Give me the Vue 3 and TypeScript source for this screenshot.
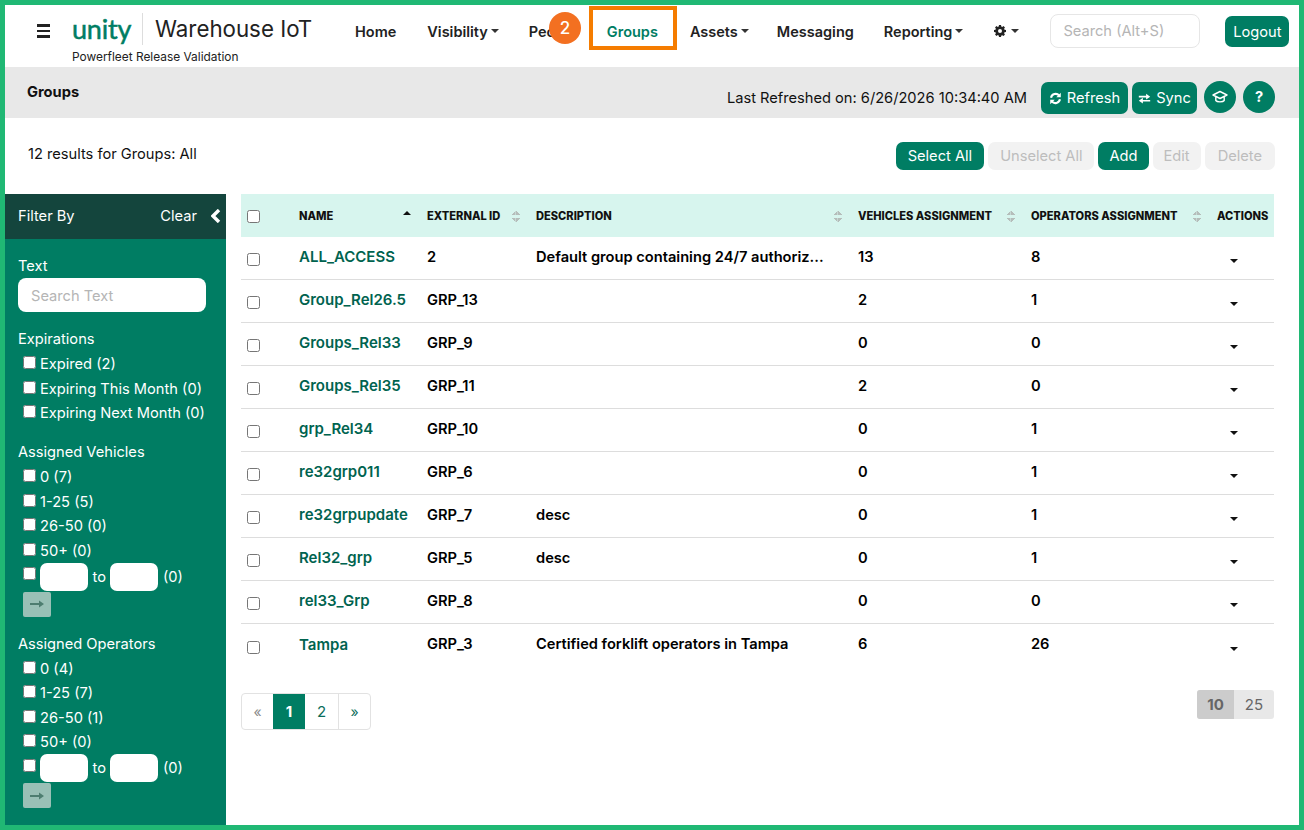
<template>
  <div class="frame">
    <header class="navbar">
      <button class="burger" aria-label="Menu"><span></span><span></span><span></span></button>
      <div class="brand">
        <div class="brand-top">
          <span class="logo-word">unity</span>
          <span class="logo-sep"></span>
          <span class="logo-product">Warehouse IoT</span>
        </div>
        <div class="brand-sub">Powerfleet Release Validation</div>
      </div>
      <nav class="nav">
        <a v-for="item in navItems" :key="item.label" class="nav-link" :class="{ active: item.label === 'Groups' }">
          {{ item.label }}<i v-if="item.caret" class="caret"></i>
        </a>
        <a class="nav-link gear-link">
          <svg class="gear" viewBox="0 0 24 24"><path fill-rule="evenodd" d="M10 1h4l.6 3a8 8 0 0 1 1.9.8L19 3.100 21.900 6l-1.700 2.500c.3.6.6 1.200.8 1.900l3 .6v4l-3 .6a8 8 0 0 1-.8 1.900l1.700 2.500L19 23l-2.500-1.700a8 8 0 0 1-1.900.8L14 25h-4l-.6-3a8 8 0 0 1-1.900-.8L5 23l-2.900-2.900 1.700-2.500a8 8 0 0 1-.8-1.900l-3-.6v-4l3-.6c.2-.7.5-1.300.8-1.900L2.100 6 5 3.100l2.500 1.700c.6-.3 1.200-.6 1.900-.8zM12 9a4 4 0 1 0 0 8 4 4 0 0 0 0-8z" transform="translate(0 -1)"/></svg><i class="caret"></i>
        </a>
      </nav>
      <input class="global-search" placeholder="Search (Alt+S)" />
      <button class="btn logout">Logout</button>

      <div class="highlight"></div>
      <div class="step-badge">2</div>
    </header>

    <section class="pagebar">
      <h1>Groups</h1>
      <div class="pagebar-right">
        <span class="refreshed">Last Refreshed on: 6/26/2026 10:34:40 AM</span>
        <button class="btn icon-btn refresh">
          <svg class="ico" viewBox="0 0 16 16"><path fill="none" stroke="currentColor" stroke-width="2.600" d="M2.500 7a5.700 5.700 0 0 1 10-2.500M13.500 9a5.700 5.700 0 0 1-10 2.500"/><path fill="currentColor" d="M14.500 1v5.500H9zM1.500 15V9.500H7z"/></svg>
          Refresh
        </button>
        <button class="btn icon-btn sync">
          <svg class="ico" viewBox="0 0 16 16"><path fill="currentColor" d="M1 4.500h9V2l5 3.500L10 9V6.500H1zM15 9.500H6V7l-5 3.500L6 14v-2.500h9z" transform="translate(0 .200)"/></svg>
          Sync
        </button>
        <button class="btn round">
          <svg class="cap" viewBox="0 0 16 16" fill="none" stroke="currentColor" stroke-width="1.400" stroke-linejoin="round"><path d="M8 2.500 15 6l-7 3.500L1 6zM3.800 8v3.500C5 13.300 11 13.300 12.200 11.500V8"/></svg>
        </button>
        <button class="btn round help">?</button>
      </div>
    </section>

    <section class="toolbar">
      <span class="results">12 results for Groups: All</span>
      <div class="toolbar-btns">
        <button class="btn sm">Select All</button>
        <button class="btn sm off">Unselect All</button>
        <button class="btn sm tight">Add</button>
        <button class="btn sm off tight">Edit</button>
        <button class="btn sm off wide">Delete</button>
      </div>
    </section>

    <div class="main">
      <aside class="filters">
        <div class="filters-head">
          <span>Filter By</span>
          <span class="clear">Clear<svg class="chev" viewBox="0 0 10 14"><path d="M8 1 2 7l6 6" fill="none" stroke="#fff" stroke-width="3.400"/></svg></span>
        </div>
        <div class="filters-body">
          <div class="f-title first">Text</div>
          <input class="f-text" placeholder="Search Text" />

          <div class="f-title exp">Expirations</div>
          <label v-for="o in expirations" :key="o" class="f-check"><input type="checkbox" />{{ o }}</label>

          <template v-for="g in rangeGroups" :key="g.title">
            <div class="f-title grp">{{ g.title }}</div>
            <label v-for="o in g.options" :key="o" class="f-check"><input type="checkbox" />{{ o }}</label>
            <div class="f-range">
              <input type="checkbox" />
              <input class="f-num" />
              <span>to</span>
              <input class="f-num" />
              <span>(0)</span>
            </div>
            <button class="f-go" disabled>
              <svg viewBox="0 0 14 8"><path d="M0 3h9V.500L14 4 9 7.500V5H0z" fill="#4d7d70"/></svg>
            </button>
          </template>
        </div>
      </aside>

      <div class="content">
        <table class="grid">
          <colgroup>
            <col v-for="w in colWidths" :key="w.key" :style="{ width: w.px + 'px' }" />
          </colgroup>
          <thead>
            <tr>
              <th><input type="checkbox" class="row-check head-check" /></th>
              <th v-for="h in headers" :key="h.label">
                <div class="th-inner">
                  {{ h.label }}
                  <i v-if="h.sort === 'asc'" class="sort-asc"></i>
                  <i v-else-if="h.sort === 'both'" class="sort-both"></i>
                </div>
              </th>
            </tr>
          </thead>
          <tbody>
            <tr v-for="r in rows" :key="r.name">
              <td><input type="checkbox" class="row-check" /></td>
              <td><a class="name-link">{{ r.name }}</a></td>
              <td>{{ r.ext }}</td>
              <td>{{ r.desc }}</td>
              <td>{{ r.vehicles }}</td>
              <td>{{ r.operators }}</td>
              <td class="action-cell"><i class="caret dark"></i></td>
            </tr>
          </tbody>
        </table>

        <div class="table-foot">
          <div class="pager">
            <span class="muted">«</span>
            <span class="current">1</span>
            <span>2</span>
            <span class="next">»</span>
          </div>
          <div class="page-size">
            <span class="on">10</span>
            <span>25</span>
          </div>
        </div>
      </div>
    </div>
  </div>
</template>

<script setup lang="ts">
interface NavItem {
  label: string;
  caret?: boolean;
}

interface Row {
  name: string;
  ext: string;
  desc: string;
  vehicles: number;
  operators: number;
}

const navItems: NavItem[] = [
  { label: 'Home' },
  { label: 'Visibility', caret: true },
  { label: 'People' },
  { label: 'Groups' },
  { label: 'Assets', caret: true },
  { label: 'Messaging' },
  { label: 'Reporting', caret: true },
];

const expirations = ['Expired (2)', 'Expiring This Month (0)', 'Expiring Next Month (0)'];

const rangeGroups = [
  { title: 'Assigned Vehicles', options: ['0 (7)', '1-25 (5)', '26-50 (0)', '50+ (0)'] },
  { title: 'Assigned Operators', options: ['0 (4)', '1-25 (7)', '26-50 (1)', '50+ (0)'] },
];

const colWidths = [
  { key: 'check', px: 52 },
  { key: 'name', px: 128 },
  { key: 'ext', px: 109 },
  { key: 'desc', px: 322 },
  { key: 'veh', px: 173 },
  { key: 'ops', px: 186 },
  { key: 'act', px: 63 },
];

const headers = [
  { label: 'NAME', sort: 'asc' },
  { label: 'EXTERNAL ID', sort: 'both' },
  { label: 'DESCRIPTION', sort: 'both' },
  { label: 'VEHICLES ASSIGNMENT', sort: 'both' },
  { label: 'OPERATORS ASSIGNMENT', sort: 'both' },
  { label: 'ACTIONS', sort: '' },
];

const rows: Row[] = [
  { name: 'ALL_ACCESS', ext: '2', desc: 'Default group containing 24/7 authoriz...', vehicles: 13, operators: 8 },
  { name: 'Group_Rel26.5', ext: 'GRP_13', desc: '', vehicles: 2, operators: 1 },
  { name: 'Groups_Rel33', ext: 'GRP_9', desc: '', vehicles: 0, operators: 0 },
  { name: 'Groups_Rel35', ext: 'GRP_11', desc: '', vehicles: 2, operators: 0 },
  { name: 'grp_Rel34', ext: 'GRP_10', desc: '', vehicles: 0, operators: 1 },
  { name: 're32grp011', ext: 'GRP_6', desc: '', vehicles: 0, operators: 1 },
  { name: 're32grpupdate', ext: 'GRP_7', desc: 'desc', vehicles: 0, operators: 1 },
  { name: 'Rel32_grp', ext: 'GRP_5', desc: 'desc', vehicles: 0, operators: 1 },
  { name: 'rel33_Grp', ext: 'GRP_8', desc: '', vehicles: 0, operators: 0 },
  { name: 'Tampa', ext: 'GRP_3', desc: 'Certified forklift operators in Tampa', vehicles: 6, operators: 26 },
];
</script>

<style>
html,
body {
  margin: 0;
  background: #fff;
}
</style>

<style scoped>
.frame {
  width: 1304px;
  height: 830px;
  box-sizing: border-box;
  border: 5px solid #20b874;
  background: #fff;
  font-family: Inter, Lato, sans-serif;
  font-size: 14.650px;
  color: #111;
  overflow: hidden;
}

/* top bar */
.navbar {
  position: relative;
  display: flex;
  align-items: flex-start;
  height: 62px;
  padding-left: 32px;
}

.burger {
  display: flex;
  flex-direction: column;
  gap: 3px;
  width: 13px;
  padding: 0;
  margin-top: 19px;
  border: 0;
  background: none;
}

.burger span {
  height: 2.500px;
  background: #222;
}

.brand {
  margin-left: 22px;
  width: 268px;
}

.brand-top {
  display: flex;
  align-items: center;
  height: 38px;
  margin-top: 5px;
}

.logo-word {
  width: 60px;
  font-family: Lato, sans-serif;
  font-size: 27px;
  font-weight: 400;
  line-height: 38px;
  color: #007d63;
  letter-spacing: -0.2px;
  -webkit-text-stroke: 0.5px #007d63;
}

.logo-sep {
  width: 1px;
  height: 32px;
  margin: 0 12px 0 10px;
  background: #ddd;
}

.logo-product {
  font-size: 22.300px;
  line-height: 30px;
  color: #222;
  white-space: nowrap;
}

.brand-sub {
  font-size: 11.900px;
  line-height: 15px;
  margin-top: 1px;
  color: #222;
}

.nav {
  display: flex;
  align-items: center;
  height: 52px;
}

.nav-link {
  display: flex;
  align-items: center;
  padding: 0 15px;
  font-size: 14.500px;
  font-weight: 600;
  color: #222;
  white-space: nowrap;
}

.nav-link:first-child {
  padding-right: 16px;
}

.nav-link.active {
  color: #007d63;
  padding-right: 17px;
}

.nav-link.active + .nav-link {
  padding-right: 13px;
}

.gear-link {
  margin-left: 1px;
}

.caret {
  display: inline-block;
  width: 0;
  height: 0;
  margin-left: 3px;
  border-top: 4px solid #333;
  border-left: 4px solid transparent;
  border-right: 4px solid transparent;
}

.caret.dark {
  border-top-color: #111;
}

.gear {
  width: 12px;
  height: 12px;
  margin-right: 2px;
  fill: #222;
}

.global-search {
  box-sizing: border-box;
  width: 150px;
  height: 34px;
  margin-top: 9px;
  margin-left: 16px;
  padding: 0 12px;
  border: 1px solid #e6e6e6;
  border-radius: 8px;
  font: inherit;
  outline: none;
}

.global-search::placeholder,
.f-text::placeholder {
  color: #b5b5b5;
}

.btn {
  display: inline-flex;
  align-items: center;
  justify-content: center;
  border: 0;
  border-radius: 7px;
  background: #007d63;
  color: #fff;
  font: inherit;
  padding: 0;
}

.logout {
  width: 64px;
  height: 31px;
  margin-top: 11px;
  margin-left: 25px;
  flex: none;
}

.highlight {
  position: absolute;
  left: 584px;
  top: 1px;
  width: 88px;
  height: 44px;
  box-sizing: border-box;
  border: 4px solid #f57c00;
}

.step-badge {
  position: absolute;
  left: 544px;
  top: 7px;
  width: 32px;
  height: 32px;
  border-radius: 50%;
  background: #f37021;
  color: #fff;
  font-size: 17px;
  font-weight: 500;
  line-height: 32px;
  text-align: center;
}

/* grey page bar */
.pagebar {
  display: flex;
  justify-content: space-between;
  height: 51px;
  background: #e8e8e8;
}

.pagebar h1 {
  margin: 15px 0 0 22px;
  font-size: 14.650px;
  font-weight: 700;
  line-height: 20px;
}

.pagebar-right {
  display: flex;
  align-items: center;
  gap: 4px;
  margin-right: 24px;
  padding-top: 15px;
  height: 32px;
}

.refreshed {
  margin-right: 10px;
}

.icon-btn {
  gap: 5px;
  height: 32px;
}

.refresh {
  width: 87px;
}

.sync {
  width: 65px;
}

.ico {
  width: 13px;
  height: 13px;
}

.round {
  width: 32px;
  height: 32px;
  border-radius: 50%;
  margin-left: 3px;
  margin-top: -2px;
}

.cap {
  width: 16px;
  height: 16px;
}

.help {
  font-weight: 700;
}

/* results row */
.toolbar {
  display: flex;
  justify-content: space-between;
  height: 76px;
  padding: 24px 24px 0 23px;
  box-sizing: border-box;
}

.results {
  line-height: 22px;
  margin-top: 1px;
}

.toolbar-btns {
  display: flex;
  gap: 4px;
  height: 28px;
}

.btn.sm {
  padding: 0 12px;
  height: 28px;
}

.btn.sm.tight {
  padding: 0 11px;
}

.btn.sm.wide {
  padding: 0 13px;
}

.btn.off {
  background: #f2f2f2;
  color: #bdbdbd;
}

/* main */
.main {
  display: flex;
}

.filters {
  width: 221px;
  height: 631px;
  flex: none;
  background: #007d63;
  color: #fff;
}

.filters-head {
  display: flex;
  justify-content: space-between;
  align-items: center;
  height: 43px;
  padding: 0 5px 2px 13px;
  background: #14453d;
}

.clear {
  display: flex;
  align-items: center;
  gap: 14px;
}

.chev {
  width: 10px;
  height: 14px;
}

.filters-body {
  padding: 18px 10px 0 13px;
}

.f-title {
  line-height: 18px;
}

.f-title.exp {
  margin-top: 18px;
  margin-bottom: 4px;
}

.f-title.grp {
  margin-top: 18px;
  margin-bottom: 4px;
}

.f-text {
  display: block;
  box-sizing: border-box;
  width: 188px;
  height: 34px;
  margin-top: 3px;
  padding: 1px 13px 0;
  border: 0;
  border-radius: 8px;
  font: inherit;
  outline: none;
}

.f-check {
  display: flex;
  align-items: center;
  height: 24.400px;
  white-space: nowrap;
}

.f-check input,
.f-range > input[type="checkbox"] {
  width: 13px;
  height: 13px;
  margin: 0 4px 3px 5px;
}

.f-range {
  display: flex;
  align-items: center;
  gap: 4.500px;
  height: 28px;
}

.f-range > input[type="checkbox"] {
  margin-right: -0.5px;
  margin-bottom: 6px;
}

.f-num {
  box-sizing: border-box;
  width: 48px;
  height: 28px;
  padding: 0 4px;
  border: 0;
  border-radius: 7px;
}

.f-go {
  display: flex;
  align-items: center;
  justify-content: center;
  width: 28px;
  height: 25px;
  margin: 1px 0 0 5px;
  padding: 0;
  border: 0;
  border-radius: 2px;
  background: #99c0b6;
}

.f-go svg {
  width: 14px;
  height: 8px;
}

/* table */
.content {
  flex: 1;
  padding: 0 25px 0 15px;
  min-width: 0;
}

.grid {
  width: 1033px;
  border-collapse: separate;
  border-spacing: 0;
  table-layout: fixed;
}

.grid th {
  height: 43px;
  padding: 1px 10px 0 6px;
  box-sizing: border-box;
  background: #d7f5ee;
  text-align: left;
  font-size: 11.100px;
  font-weight: 800;
  white-space: nowrap;
}

.grid th:last-child {
  padding-right: 0;
}

.th-inner {
  display: flex;
  align-items: center;
  justify-content: space-between;
}

.grid td {
  height: 43px;
  padding: 0 6px 3px;
  box-sizing: border-box;
  border-bottom: 1px solid #ddd;
  font-size: 14.650px;
  font-weight: 600;
  color: #000;
  white-space: nowrap;
  overflow: hidden;
}

.grid td:first-child {
  padding-bottom: 0;
}

.grid tr:last-child td {
  border-bottom: 0;
}

.name-link {
  color: #00634f;
  font-size: 15px;
}

.row-check {
  display: block;
  width: 13px;
  height: 13px;
  margin: 3px 0 0 0;
}

.row-check.head-check {
  margin-top: 0;
}

.grid td.action-cell {
  padding: 0 0 0 16px;
}

.sort-asc {
  width: 0;
  height: 0;
  margin-bottom: 6px;
  border-bottom: 4px solid #111;
  border-left: 4px solid transparent;
  border-right: 4px solid transparent;
}

.sort-both {
  width: 9px;
  height: 11px;
  flex: none;
  background:
    linear-gradient(to top left, #b5bdba 50%, transparent 50%) left top / 50% 4px no-repeat,
    linear-gradient(to top right, #b5bdba 50%, transparent 50%) right top / 50% 4px no-repeat,
    linear-gradient(to bottom left, #b5bdba 50%, transparent 50%) left bottom / 50% 4px no-repeat,
    linear-gradient(to bottom right, #b5bdba 50%, transparent 50%) right bottom / 50% 4px no-repeat;
}

.table-foot {
  display: flex;
  justify-content: space-between;
  align-items: flex-start;
  width: 1033px;
  margin-top: 23px;
}

.pager {
  display: flex;
  height: 37px;
  box-sizing: border-box;
  border: 1px solid #e2e2e2;
  border-radius: 4px;
  margin-top: 3px;
  overflow: hidden;
}

.pager span {
  display: flex;
  align-items: center;
  justify-content: center;
  width: 33px;
  color: #0a6d5a;
  font-size: 15px;
}

.pager .muted {
  width: 31px;
  color: #888;
  font-size: 14px;
}

.pager .current {
  width: 32px;
  background: #007d63;
  color: #fff;
  font-weight: 700;
}

.pager .next {
  width: 31px;
  border-left: 1px solid #e2e2e2;
  font-size: 14px;
}

.page-size {
  display: flex;
  height: 29px;
  border-radius: 3px;
  overflow: hidden;
  background: #e8e8e8;
  color: #666;
  font-size: 15px;
}

.page-size span {
  display: flex;
  align-items: center;
  justify-content: center;
  width: 40px;
}

.page-size .on {
  width: 37px;
  background: #ccc;
  font-weight: 700;
}
</style>
